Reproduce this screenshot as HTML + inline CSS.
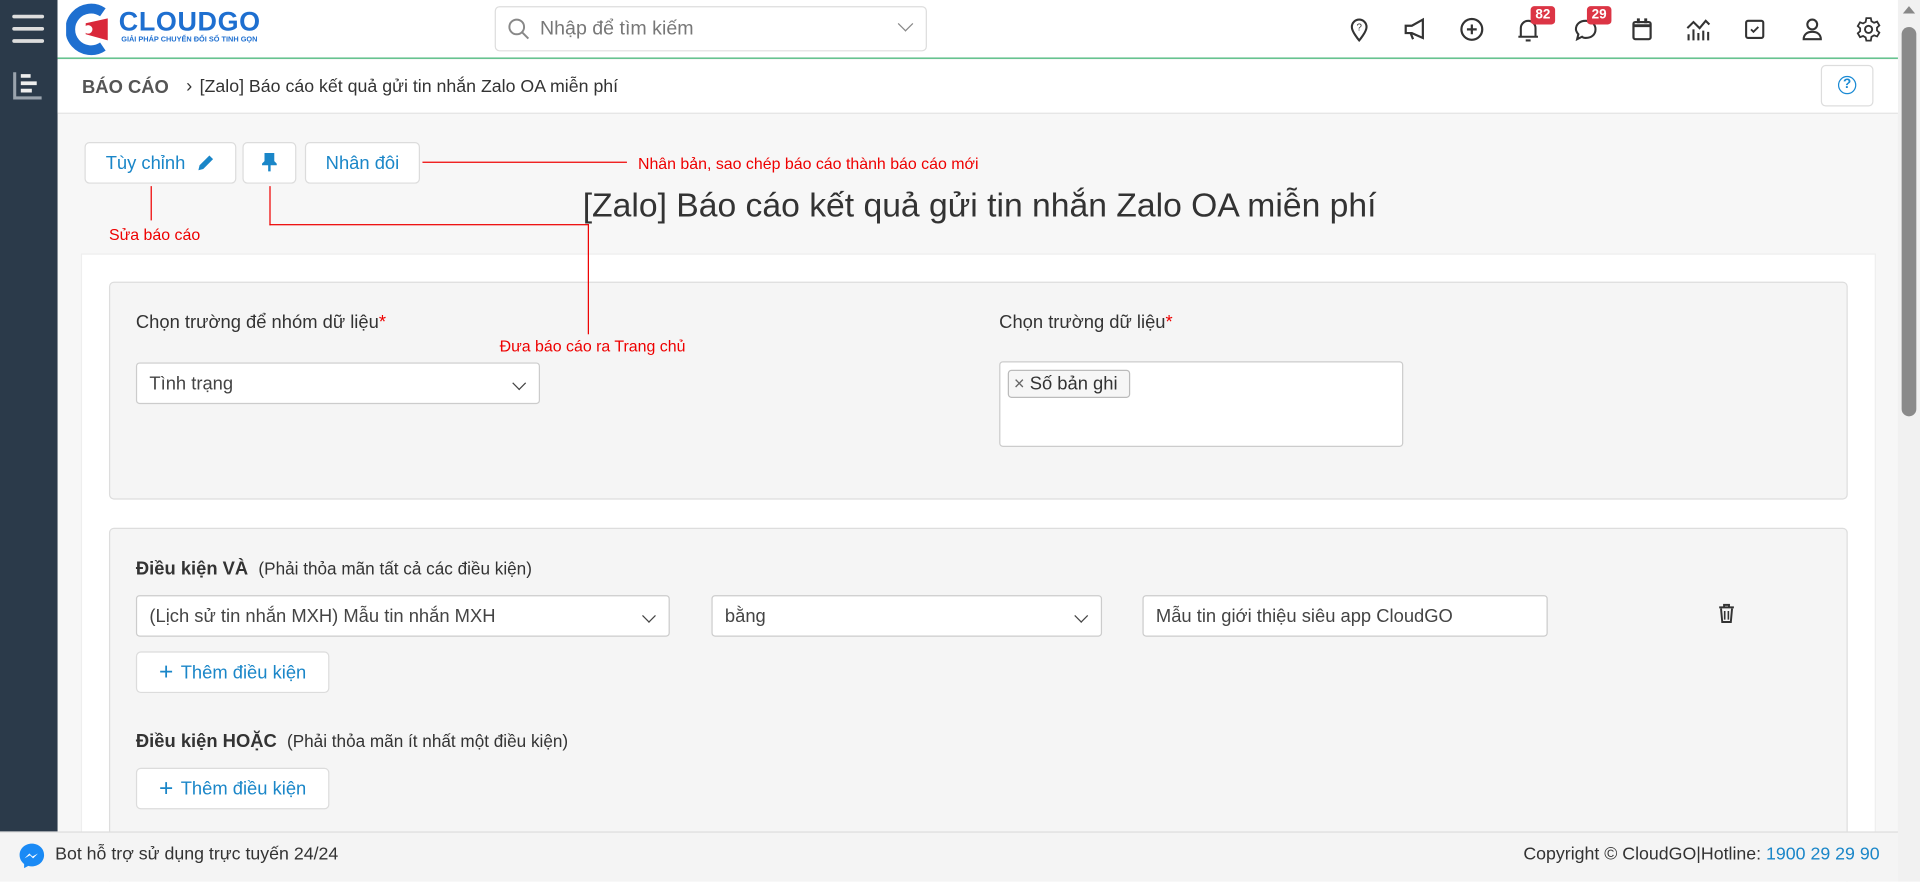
<!DOCTYPE html>
<html><head><meta charset="utf-8"><style>
*{box-sizing:border-box;margin:0;padding:0}
html,body{width:1920px;height:882px;overflow:hidden;background:#fff;font-family:"Liberation Sans","DejaVu Sans",sans-serif}
#s{position:absolute;left:0;top:0;width:1568px;height:720px;overflow:hidden;transform:scale(1.22449);transform-origin:0 0;background:#f7f7f7}
.a{position:absolute}
.ic{position:absolute;top:13px;width:22px;height:22px}
.btn{position:absolute;background:#fff;border:1px solid #dcdcdc;border-radius:4px;color:#1a86c8;font-size:15px;display:flex;align-items:center;justify-content:center}
.sel{position:absolute;background:#fff;border:1px solid #ccc;border-radius:3px;font-size:15px;color:#444;padding-left:10px;display:flex;align-items:center}
.red{position:absolute;background:#e00;z-index:5}
.rt{position:absolute;color:#e00;font-size:13px;z-index:5}
.chev{position:absolute;right:12px;top:12px;width:8px;height:8px;border-right:1.6px solid #444;border-bottom:1.6px solid #444;transform:rotate(45deg)}
</style></head><body><div id="s">
<div class="a" style="left:0;top:0;width:47px;height:680px;background:#2b3a4a"></div>
<div class="a" style="left:10px;top:12px;width:26px;height:3px;background:#ddd;border-radius:2px"></div>
<div class="a" style="left:10px;top:22px;width:26px;height:3px;background:#ddd;border-radius:2px"></div>
<div class="a" style="left:10px;top:32px;width:26px;height:3px;background:#ddd;border-radius:2px"></div>
<svg class="a" style="left:10px;top:58px" width="26" height="24"><path d="M2 1v21h22" stroke="#9aa3ad" stroke-width="2.5" fill="none"/><path d="M7 4h8M7 10h13M7 16h9" stroke="#eee" stroke-width="3"/></svg>
<div class="a" style="left:47px;top:0;width:1503px;height:48px;background:#fff;border-bottom:1px solid #3cb371"></div>
<svg class="a" style="left:54px;top:2px" width="44" height="44"><path d="M30 8A17 17 0 1 0 30 36" stroke="#1e6fd0" stroke-width="8" fill="none"/><path d="M16 17l18 -4v18l-18-5z" fill="#d9273a"/><circle cx="18" cy="22" r="3.5" fill="#fff"/></svg>
<div class="a" style="left:97px;top:5px;font-size:22px;font-weight:bold;color:#1e6fd0;letter-spacing:0.5px">CLOUDGO</div>
<div class="a" style="left:99px;top:30px;font-size:6px;color:#1e6fd0;font-weight:bold">GIẢI PHÁP CHUYỂN ĐỔI SỐ TINH GỌN</div>
<div class="a" style="left:404px;top:5px;width:353px;height:37px;border:1px solid #ddd;border-radius:4px;background:#fff"></div>
<svg class="a" style="left:414px;top:14px" width="20" height="20"><circle cx="8" cy="8" r="6" stroke="#888" stroke-width="1.6" fill="none"/><path d="M12.5 12.5l5 5" stroke="#888" stroke-width="1.6"/></svg>
<div class="a" style="left:441px;top:15px;font-size:16px;color:#777">Nhập để tìm kiếm</div>
<div class="a" style="left:735px;top:15px;width:9px;height:9px;border-right:1.5px solid #888;border-bottom:1.5px solid #888;transform:rotate(45deg)"></div>
<svg class="ic" style="left:1099px" viewBox="0 0 22 22"><path d="M11 20s-6-7-6-11a6 6 0 0 1 12 0c0 4-6 11-6 11z" stroke="#333" stroke-width="1.7" fill="none"/><text x="11" y="12" font-size="8" text-anchor="middle" fill="#333" font-family="Liberation Sans">?</text></svg>
<svg class="ic" style="left:1145px" viewBox="0 0 22 22"><path d="M3 8h5l9-5v15l-9-4H3zM7 14l2 5" stroke="#333" stroke-width="1.8" fill="none"/></svg>
<svg class="ic" style="left:1191px" viewBox="0 0 22 22"><circle cx="11" cy="11" r="8.5" stroke="#333" stroke-width="1.8" fill="none"/><path d="M11 7v8M7 11h8" stroke="#333" stroke-width="1.8"/></svg>
<svg class="ic" style="left:1237px" viewBox="0 0 22 22"><path d="M5 17V10a6 6 0 0 1 12 0v7zM3 17h16M9 20h4" stroke="#333" stroke-width="1.7" fill="none"/></svg>
<svg class="ic" style="left:1284px" viewBox="0 0 22 22"><path d="M11 4c5 0 8 3 8 7s-3 7-8 7c-1 0-2 0-3-1l-4 2 1-4c-1-1-2-3-2-4 0-4 3-7 8-7z" stroke="#333" stroke-width="1.7" fill="none"/></svg>
<svg class="ic" style="left:1330px" viewBox="0 0 22 22"><rect x="4" y="5" width="14" height="14" rx="1.5" stroke="#333" stroke-width="1.8" fill="none"/><path d="M4 8h14M8 2v4M14 2v4" stroke="#333" stroke-width="2.4"/></svg>
<svg class="ic" style="left:1376px" viewBox="0 0 22 22"><path d="M2 10l5-5 5 5 5-6 3 3M3 20v-5M7 20v-9M11 20v-6M15 20v-8M19 20v-7" stroke="#333" stroke-width="1.7" fill="none"/></svg>
<svg class="ic" style="left:1422px" viewBox="0 0 22 22"><rect x="4" y="4" width="14" height="14" rx="1.5" stroke="#333" stroke-width="1.7" fill="none"/><path d="M8 11l2 2 4-4" stroke="#333" stroke-width="1.5" fill="none"/></svg>
<svg class="ic" style="left:1469px" viewBox="0 0 22 22"><circle cx="11" cy="7" r="4" stroke="#333" stroke-width="1.7" fill="none"/><path d="M4 19c0-4 3-6 7-6s7 2 7 6z" stroke="#333" stroke-width="1.7" fill="none"/></svg>
<svg class="ic" style="left:1515px" viewBox="0 0 24 24"><circle cx="12" cy="12" r="3.2" stroke="#333" stroke-width="1.7" fill="none"/><path d="M10 2h4l.6 2.8 2.3 1.3 2.7-1 2 3.4-2.1 1.9v2.6l2.1 1.9-2 3.4-2.7-1-2.3 1.3L14 22h-4l-.6-2.8-2.3-1.3-2.7 1-2-3.4 2.1-1.9v-2.6L2.4 9.1l2-3.4 2.7 1 2.3-1.3z" stroke="#333" stroke-width="1.6" fill="none"/></svg>
<div class="a" style="left:1250px;top:5px;width:20px;height:15px;background:#dc3545;border-radius:3px;color:#fff;font-size:11px;font-weight:bold;text-align:center;line-height:15px">82</div>
<div class="a" style="left:1296px;top:5px;width:20px;height:15px;background:#dc3545;border-radius:3px;color:#fff;font-size:11px;font-weight:bold;text-align:center;line-height:15px">29</div>
<div class="a" style="left:1550px;top:0;width:18px;height:720px;background:#f1f1f1"></div>
<div class="a" style="left:1554px;top:5px;width:0;height:0;border-left:5px solid transparent;border-right:5px solid transparent;border-bottom:6px solid #888"></div>
<div class="a" style="left:1553px;top:22px;width:12px;height:318px;background:#8a8a8a;border-radius:6px"></div>
<div class="a" style="left:47px;top:49px;width:1503px;height:44px;background:#fff;border-bottom:1px solid #e3e3e3"></div>
<div class="a" style="left:67px;top:63px;font-size:15px;font-weight:bold;color:#555">BÁO CÁO</div>
<div class="a" style="left:152px;top:62px;font-size:15px;color:#333">›</div>
<div class="a" style="left:163px;top:63px;font-size:14.5px;color:#333">[Zalo] Báo cáo kết quả gửi tin nhắn Zalo OA miễn phí</div>
<div class="a" style="left:1487px;top:53px;width:43px;height:34px;border:1px solid #ddd;border-radius:4px;background:#fff"></div>
<div class="a" style="left:1501px;top:62px;width:15px;height:15px;border:1.8px solid #1a8ad4;border-radius:50%;color:#1a8ad4;font-size:11px;font-weight:bold;text-align:center;line-height:12px">?</div>
<div class="btn" style="left:69px;top:116px;width:124px;height:34px">Tùy chỉnh&nbsp;&nbsp;<svg width="16" height="16" viewBox="0 0 16 16"><path d="M2 14l1-4 8-8 3 3-8 8z" fill="#1a86c8"/></svg></div>
<div class="btn" style="left:198px;top:116px;width:44px;height:34px"><svg width="12" height="16" viewBox="0 0 12 16"><path d="M2 1h8M3 3h6v4l2 2H1l2-2zM6 9v6" stroke="#1a86c8" stroke-width="2" fill="#1a86c8"/></svg></div>
<div class="btn" style="left:249px;top:116px;width:94px;height:34px">Nhân đôi</div>
<div class="a" style="left:0;top:152px;width:1600px;text-align:center;font-size:27.5px;color:#333">[Zalo] Báo cáo kết quả gửi tin nhắn Zalo OA miễn phí</div>
<div class="a" style="left:66px;top:207px;width:1466px;height:520px;background:#fff;border:1px solid #eee"></div>
<div class="a" style="left:89px;top:230px;width:1420px;height:178px;background:#f5f5f5;border:1px solid #ddd;border-radius:4px"></div>
<div class="red" style="left:345px;top:132px;width:167px;height:1px"></div>
<div class="rt" style="left:521px;top:126px">Nhân bản, sao chép báo cáo thành báo cáo mới</div>
<div class="red" style="left:123px;top:152px;width:1px;height:28px"></div>
<div class="rt" style="left:89px;top:184px">Sửa báo cáo</div>
<div class="red" style="left:220px;top:152px;width:1px;height:32px"></div>
<div class="red" style="left:220px;top:183px;width:261px;height:1px"></div>
<div class="red" style="left:480px;top:183px;width:1px;height:90px"></div>
<div class="rt" style="left:408px;top:275px">Đưa báo cáo ra Trang chủ</div>
<div class="a" style="left:111px;top:255px;font-size:15px;color:#333">Chọn trường để nhóm dữ liệu<span style="color:#e00">*</span></div>
<div class="sel" style="left:111px;top:296px;width:330px;height:34px">Tình trạng<div class="chev"></div></div>
<div class="a" style="left:816px;top:255px;font-size:15px;color:#333">Chọn trường dữ liệu<span style="color:#e00">*</span></div>
<div class="a" style="left:816px;top:295px;width:330px;height:70px;background:#fff;border:1px solid #ccc;border-radius:3px"></div>
<div class="a" style="left:823px;top:302px;width:100px;height:23px;border:1px solid #bbb;border-radius:3px;background:#f6f6f6;font-size:15px;color:#333;padding-left:4px;line-height:21px"><span style="color:#666">×</span> Số bản ghi</div>
<div class="a" style="left:89px;top:431px;width:1420px;height:300px;background:#f5f5f5;border:1px solid #ddd;border-radius:4px"></div>
<div class="a" style="left:111px;top:456px;font-size:15px;color:#333"><b>Điều kiện VÀ</b>&nbsp; <span style="font-size:14px">(Phải thỏa mãn tất cả các điều kiện)</span></div>
<div class="sel" style="left:111px;top:486px;width:436px;height:34px">(Lịch sử tin nhắn MXH) Mẫu tin nhắn MXH<div class="chev"></div></div>
<div class="sel" style="left:581px;top:486px;width:319px;height:34px">bằng<div class="chev"></div></div>
<div class="sel" style="left:933px;top:486px;width:331px;height:34px">Mẫu tin giới thiệu siêu app CloudGO</div>
<svg class="a" style="left:1403px;top:493px" width="14" height="16" viewBox="0 0 14 16"><path d="M1 3h12M5 3V1h4v2M2.5 4l1 11h7l1-11" stroke="#333" stroke-width="1.6" fill="none"/><path d="M5.5 6v7M8.5 6v7" stroke="#333" stroke-width="1.3"/></svg>
<div class="btn" style="left:111px;top:532px;width:158px;height:34px"><span style="font-size:20px;margin-right:6px">+</span>Thêm điều kiện</div>
<div class="a" style="left:111px;top:597px;font-size:15px;color:#333"><b>Điều kiện HOẶC</b>&nbsp; <span style="font-size:14px">(Phải thỏa mãn ít nhất một điều kiện)</span></div>
<div class="btn" style="left:111px;top:627px;width:158px;height:34px"><span style="font-size:20px;margin-right:6px">+</span>Thêm điều kiện</div>
<div class="a" style="left:0;top:679px;width:1550px;height:41px;background:#f4f4f4;border-top:1px solid #ddd;z-index:6"></div>
<svg class="a" style="left:14px;top:687px;z-index:7" width="24" height="24" viewBox="0 0 24 24"><path d="M12 2C6.5 2 2 6 2 11.3c0 3 1.4 5.6 3.7 7.3V22l3.4-1.9c.9.3 1.9.4 2.9.4 5.5 0 10-4 10-9.3S17.5 2 12 2z" fill="#1a8af5"/><path d="M6 14l4-4 2.5 2.5L17 10l-4 4-2.5-2.5z" fill="#fff"/></svg>
<div class="a" style="left:45px;top:690px;font-size:14.5px;color:#333;z-index:7">Bot hỗ trợ sử dụng trực tuyến 24/24</div>
<div class="a" style="right:33px;top:690px;font-size:14.5px;color:#333;z-index:7">Copyright © CloudGO|Hotline: <span style="color:#1a86c8">1900 29 29 90</span></div>
</div></body></html>
